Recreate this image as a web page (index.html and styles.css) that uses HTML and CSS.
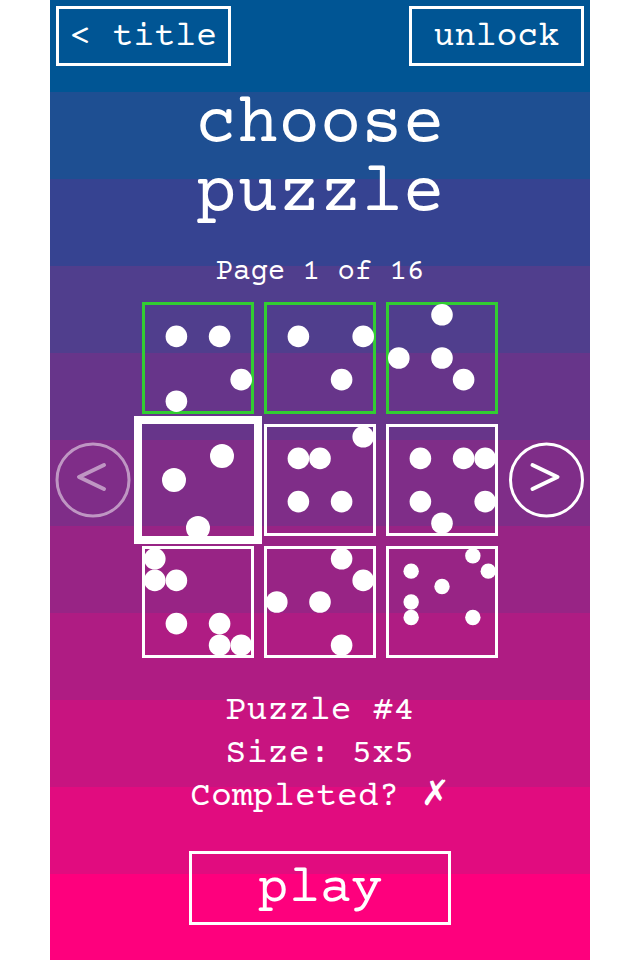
FILE: index.html
```html
<!DOCTYPE html>
<html lang="en">
<head>
<meta charset="utf-8">
<meta name="viewport" content="width=device-width, initial-scale=1">
<title>choose puzzle</title>
<link rel="stylesheet" href="styles.css">
</head>
<body>
<main class="screen">
  <header class="topbar">
    <button class="box-button" type="button">&lt; title</button>
    <button class="box-button" type="button">unlock</button>
  </header>
  <h1 class="heading">choose<br>puzzle</h1>
  <p class="page-label">Page 1 of 16</p>
  <section class="picker">
    <button class="arrow" type="button" aria-label="Previous page" disabled>
      <svg viewBox="0 0 75 75"><circle cx="37" cy="37" r="36"/><path d="M48 22 23 34 48 46"/></svg>
    </button>
    <div class="grid" id="grid"></div>
    <button class="arrow" type="button" aria-label="Next page">
      <svg viewBox="0 0 75 75"><circle cx="37.500" cy="37" r="36"/><path d="M23.500 22 48.500 34 23.500 46"/></svg>
    </button>
  </section>
  <section class="info">
    <p>Puzzle #4</p>
    <p>Size: 5x5</p>
    <p>Completed? <span class="mark">✗</span></p>
  </section>
  <button class="box-button play" type="button">play</button>
</main>
<script src="puzzles.js"></script>
</body>
</html>
```
FILE: styles.css
```css
* { box-sizing: border-box; }

body {
  margin: 0;
  background: #fff;
  color: #fff;
  font-family: "Courier Prime", "Courier New", "Liberation Mono", monospace;
}

h1, p { margin: 0; font-weight: 400; }

button {
  margin: 0;
  padding: 0;
  background: none;
  color: inherit;
  font: inherit;
  cursor: pointer;
}

.screen {
  display: flex;
  flex-direction: column;
  width: min(100%, 56.25vh);
  min-height: 100vh;
  margin: 0 auto;
  padding: 6px 6px 35px;
  text-align: center;
  background: linear-gradient(
    #005594 9.6%, #1e4f92 9.6% 18.65%, #364391 18.65% 27.7%,
    #503e8d 27.7% 36.75%, #67358a 36.75% 45.8%, #7f2d88 45.8% 54.8%,
    #982485 54.8% 63.85%, #af1c83 63.85% 72.9%, #c81480 72.9% 82%,
    #e10c7f 82% 91%, #fe007d 91%);
}

.topbar { display: flex; justify-content: space-between; }

.box-button {
  width: 175px;
  height: 60px;
  padding-top: 3px;
  border: 3px solid #fff;
  font-size: 35px;
}

.heading {
  margin-top: 26px;
  font-size: 69px;
  line-height: 69px;
}

.page-label {
  margin-top: 23px;
  font-size: 29px;
  line-height: 40px;
}

.picker {
  display: flex;
  align-items: center;
  justify-content: space-between;
  margin-top: 9px;
}

.arrow { flex: none; width: 75px; height: 75px; border: 0; }
.arrow:disabled { opacity: 0.5; cursor: default; }
.arrow svg {
  display: block;
  overflow: visible;
  fill: none;
  stroke: #fff;
  stroke-width: 3;
  stroke-linecap: round;
  stroke-linejoin: round;
}
.arrow path { stroke-width: 4; }

.grid {
  flex: 0 1 356px;
  display: grid;
  grid-template-columns: repeat(3, 1fr);
  gap: 10px;
}

.tile {
  position: relative;
  aspect-ratio: 1;
  border: 3px solid #fff;
}
.tile.done { border-color: #32cd32; }
.tile.selected { margin: -8px; border-width: 8px; }

/* The dot board reaches slightly over the tile's border. */
.board {
  position: absolute;
  inset: -1px;
  fill: #fff;
}
.selected .board { inset: -4px; }

.info {
  margin-top: 32px;
  font-size: 35px;
  line-height: 43px;
}
.mark { font-family: "DejaVu Sans", sans-serif; line-height: 1; }

.play {
  align-self: center;
  width: 262px;
  height: 74px;
  margin-top: 32px;
  font-size: 52px;
}
```
FILE: puzzles.js
```js
// Each dot is a [column, row] pair on a size x size board.
const puzzles = [
  { size: 5, done: true, dots: [[1,1],[3,1],[4,3],[1,4]] },
  { size: 5, done: true, dots: [[1,1],[4,1],[3,3]] },
  { size: 5, done: true, dots: [[2,0],[0,2],[2,2],[3,3]] },
  { size: 5, selected: true, dots: [[3,1],[1,2],[2,4]] },
  { size: 5, dots: [[4,0],[1,1],[2,1],[1,3],[3,3]] },
  { size: 5, dots: [[1,1],[3,1],[4,1],[1,3],[4,3],[2,4]] },
  { size: 5, dots: [[0,0],[0,1],[1,1],[1,3],[3,3],[3,4],[4,4]] },
  { size: 5, dots: [[3,0],[4,1],[0,2],[2,2],[3,4]] },
  { size: 7, dots: [[5,0],[1,1],[6,1],[3,2],[1,3],[1,4],[5,4]] }
];

document.getElementById("grid").innerHTML = puzzles.map((p, i) => {
  const state = p.done ? " done" : p.selected ? " selected" : "";
  const dots = p.dots.map(([c, r]) =>
    `<circle cx="${c + 0.5}" cy="${r + 0.5}" r="0.5"/>`).join("");
  return `<button class="tile${state}" type="button" aria-label="Puzzle ${i + 1}" aria-pressed="${!!p.selected}">` +
    `<svg class="board" viewBox="0 0 ${p.size} ${p.size}">${dots}</svg></button>`;
}).join("");
```
